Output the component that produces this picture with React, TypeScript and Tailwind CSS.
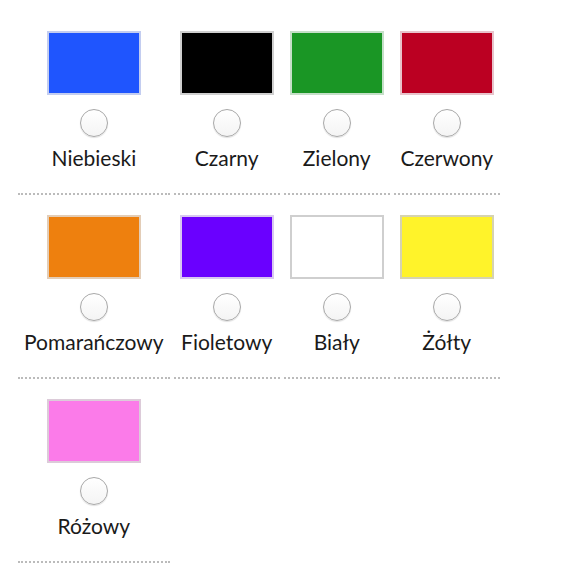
import React from "react";

const colors = [
  { name: "Niebieski", fill: "bg-[#1f55fe]", edge: "border-[#c3cdf0]" },
  { name: "Czarny", fill: "bg-[#000000]", edge: "border-[#cfcfcf]" },
  { name: "Zielony", fill: "bg-[#1a9625]", edge: "border-[#c5dfc8]" },
  { name: "Czerwony", fill: "bg-[#bb0022]", edge: "border-[#e8c3cb]" },
  { name: "Pomarańczowy", fill: "bg-[#ee800e]", edge: "border-[#e3cdb7]" },
  { name: "Fioletowy", fill: "bg-[#6a00ff]", edge: "border-[#d8c8f0]" },
  { name: "Biały", fill: "bg-[#ffffff]", edge: "border-[#cfcfcf]" },
  { name: "Żółty", fill: "bg-[#fff32a]", edge: "border-[#d6d3b0]" },
  { name: "Różowy", fill: "bg-[#fb7be9]", edge: "border-[#dccbd9]" },
];

const ColorOption = ({ name, fill, edge }: { name: string; fill: string; edge: string }) => {
  return (
    <label className="flex flex-col items-center px-[6px] pt-4 pb-[23px] border-b-2 border-dotted border-[#bbbbbb]">
      <span className={`block w-[94px] h-[64px] border-2 ${fill} ${edge}`} />
      <input
        type="radio"
        name="kolor"
        className="appearance-none mt-[14px] w-[28px] h-[28px] rounded-full border-[1.5px] border-[#a8a8a8] bg-gradient-to-b from-white to-[#f4f4f4] shadow-[0_1px_1px_rgba(0,0,0,0.12)]"
      />
      <span className="mt-[8px] text-[21px] leading-[25px] text-[#1a1a1a] whitespace-nowrap">{name}</span>
    </label>
  );
};

export default function App() {
  return (
    <div className="min-h-screen w-full bg-white pt-[15px] pl-[18px]" style={{ fontFamily: "Lato, 'Open Sans', sans-serif" }}>
      <div className="grid w-fit grid-cols-[repeat(4,max-content)] gap-x-1 gap-y-1">
        {colors.map((c) => (
          <ColorOption key={c.name} name={c.name} fill={c.fill} edge={c.edge} />
        ))}
      </div>
    </div>
  );
}
